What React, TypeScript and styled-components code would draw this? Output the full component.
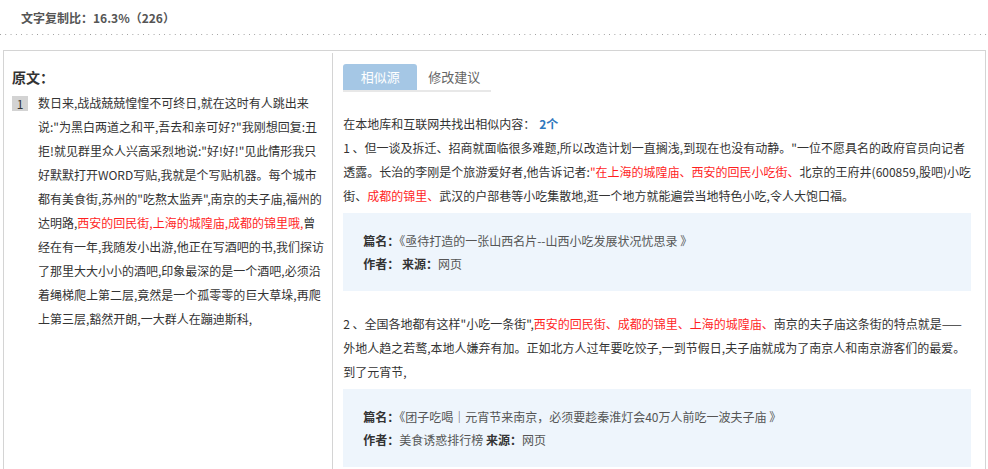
import React from "react";
import styled, { createGlobalStyle } from "styled-components";

const GlobalStyle = createGlobalStyle`
  html, body {
    margin: 0;
    padding: 0;
    overflow: hidden;
    background: #fff;
  }
  body {
    font-family: "Microsoft YaHei", "Noto Sans CJK SC", "Liberation Sans", sans-serif;
    font-size: 12px;
    color: #333;
  }
`;

const Page = styled.div`
  width: 988px;
`;

const Header = styled.div`
  height: 35px;
  padding-left: 21px;
  line-height: 36px;
  font-size: 12px;
  font-weight: bold;
  color: #555;
  background-image: linear-gradient(to right, #9a9a9a 1px, transparent 1px);
  background-size: 5.3px 1px;
  background-repeat: repeat-x;
  background-position: 0 34px;
  box-sizing: border-box;
`;

const Frame = styled.div`
  margin: 15px 2px 0 3px;
  border: 1px solid #d4d4d4;
  border-bottom: none;
  display: flex;
  min-height: 440px;
`;

const SourcePanel = styled.div`
  width: 319px;
  padding: 14px 8px 0 8px;
`;

const PanelTitle = styled.div`
  height: 24px;
  line-height: 24px;
  font-size: 14px;
  font-weight: bold;
  color: #333;
  margin-bottom: 2px;
`;

const SourceRow = styled.div`
  display: flex;
  align-items: flex-start;
`;

const LineNo = styled.span`
  flex: none;
  width: 16px;
  height: 15px;
  margin-top: 5px;
  margin-right: 10px;
  background: #d3d3d3;
  color: #333;
  font-size: 12px;
  line-height: 15px;
  text-align: center;
`;

const Para = styled.p`
  margin: 0;
  line-height: 24px;
  white-space: nowrap;
  color: #333;
`;

const Hit = styled.span`
  color: #ff1f1f;
`;

const ResultPanel = styled.div`
  flex: 1;
  margin-top: 2px;
  border-left: 1px solid #d4d4d4;
  padding: 11px 14px 0 10px;
`;

const Tabs = styled.div`
  display: flex;
  width: 148px;
  border-bottom: 2px solid #e8e8e8;
`;

const Tab = styled.div<{ active?: boolean }>`
  width: 74px;
  height: 26px;
  line-height: 26px;
  text-align: center;
  font-size: 13px;
  border-radius: 3px 3px 0 0;
  color: ${(p) => (p.active ? "#fff" : "#666")};
  background: ${(p) => (p.active ? "#a5c7e5" : "transparent")};
`;

const Summary = styled.p`
  margin: 20px 0 0;
  line-height: 24px;
`;

const Count = styled.b`
  color: #2f78bd;
  margin-left: 4px;
`;

const Meta = styled.div`
  margin: 5px 0 21px;
  padding: 16px 20px;
  background: #eef5fc;
  line-height: 23px;
  color: #555;
`;

const Label = styled.b`
  color: #333;
`;

const App = () => {
  return (
    <Page>
      <GlobalStyle />
      <Header>文字复制比：16.3%（226）</Header>
      <Frame>
        <SourcePanel>
          <PanelTitle>原文：</PanelTitle>
          <SourceRow>
            <LineNo>1</LineNo>
            <Para>
              数日来,战战兢兢惶惶不可终日,就在这时有人跳出来
              <br />
              说:"为黑白两道之和平,吾去和亲可好?"我刚想回复:丑
              <br />
              拒!就见群里众人兴高采烈地说:"好!好!"见此情形我只
              <br />
              好默默打开WORD写贴,我就是个写贴机器。每个城市
              <br />
              都有美食街,苏州的"吃熬太监弄",南京的夫子庙,福州的
              <br />
              达明路,<Hit>西安的回民街,上海的城隍庙,成都的锦里哦,</Hit>曾
              <br />
              经在有一年,我随发小出游,他正在写酒吧的书,我们探访
              <br />
              了那里大大小小的酒吧,印象最深的是一个酒吧,必须沿
              <br />
              着绳梯爬上第二层,竟然是一个孤零零的巨大草垛,再爬
              <br />
              上第三层,豁然开朗,一大群人在蹦迪斯科,
            </Para>
          </SourceRow>
        </SourcePanel>
        <ResultPanel>
          <Tabs>
            <Tab active>相似源</Tab>
            <Tab>修改建议</Tab>
          </Tabs>
          <Summary>
            在本地库和互联网共找出相似内容：<Count>2个</Count>
          </Summary>
          <Para>
            1 、但一谈及拆迁、招商就面临很多难题,所以改造计划一直搁浅,到现在也没有动静。"一位不愿具名的政府官员向记者
            <br />
            透露。长治的李刚是个旅游爱好者,他告诉记者:
            <Hit>"在上海的城隍庙、西安的回民小吃街、</Hit>北京的王府井(600859,股吧)小吃
            <br />
            街、<Hit>成都的锦里、</Hit>武汉的户部巷等小吃集散地,逛一个地方就能遍尝当地特色小吃,令人大饱口福。
          </Para>
          <Meta>
            <Label>篇名：</Label>《亟待打造的一张山西名片--山西小吃发展状况忧思录 》
            <br />
            <Label>作者：</Label> <Label>来源：</Label>网页
          </Meta>
          <Para>
            2 、全国各地都有这样"小吃一条街",
            <Hit>西安的回民街、成都的锦里、上海的城隍庙、</Hit>南京的夫子庙这条街的特点就是——
            <br />
            外地人趋之若鹜,本地人嫌弃有加。正如北方人过年要吃饺子,一到节假日,夫子庙就成为了南京人和南京游客们的最爱。
            <br />
            到了元宵节,
          </Para>
          <Meta>
            <Label>篇名：</Label>《团子吃喝｜元宵节来南京，必须要趁秦淮灯会40万人前吃一波夫子庙 》
            <br />
            <Label>作者：</Label>美食诱惑排行榜 <Label>来源：</Label>网页
          </Meta>
        </ResultPanel>
      </Frame>
    </Page>
  );
};

export default App;
